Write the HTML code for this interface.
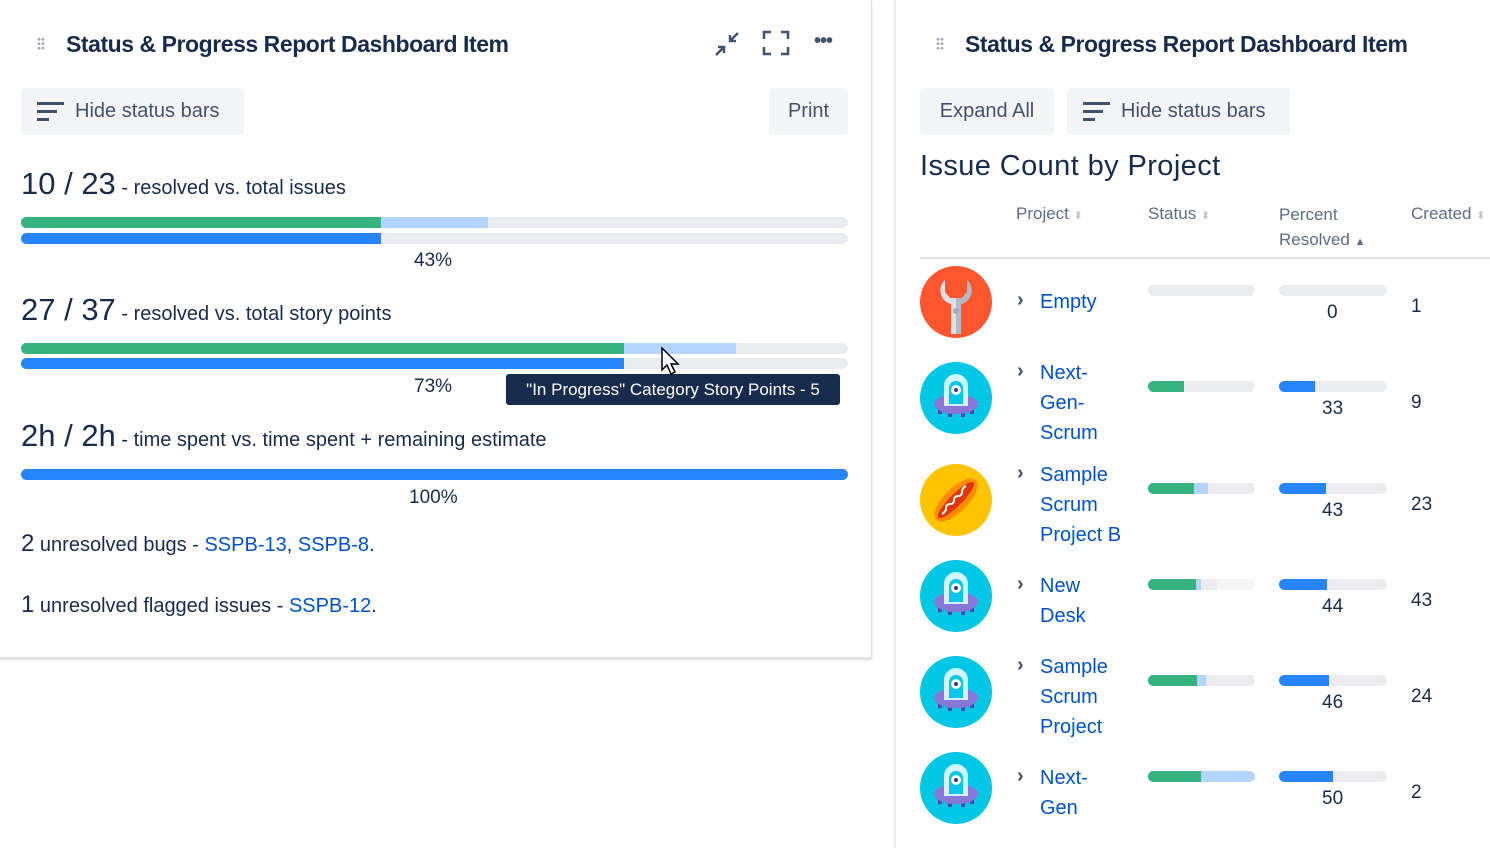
<!DOCTYPE html>
<html><head><meta charset="utf-8"><style>
*{margin:0;padding:0;box-sizing:border-box}
body{width:1490px;height:848px;background:#fff;font-family:"Liberation Sans",sans-serif;color:#172b4d;position:relative;overflow:hidden}
.a{position:absolute;white-space:nowrap}
.bar{position:absolute;height:11px;border-radius:6px;background:#ebecf0;overflow:hidden}
.bar i{position:absolute;top:0;height:100%}
.g{background:#36b37e}.l{background:#b3d4ff}.b{background:#2684ff}
.btn{position:absolute;background:#f4f5f7;border-radius:4px;font-size:20px;color:#42526e;height:47px;line-height:47px}
a{color:#0052cc;text-decoration:none}
.lnk{color:#0052cc;font-size:20px;line-height:30px}
.chev{position:absolute;font-size:20px;color:#42526e;font-weight:bold}
.num{position:absolute;font-size:19px;color:#172b4d}
.dots{position:absolute;width:8px;height:14px;background:radial-gradient(circle,#a5adba 1.3px,transparent 1.6px) 0 0/4px 4.5px}
</style></head><body>
<div class="a" style="left:0;top:0;width:872px;height:659px;border-right:1px solid #dfe1e6;border-bottom:2px solid #dfe1e6;box-shadow:0 1px 2px rgba(9,30,66,.15)"></div>
<div class="dots" style="left:37px;top:37px"></div>
<div class="a" style="left:66px;top:31px;font-size:23px;font-weight:bold;letter-spacing:-0.45px">Status &amp; Progress Report Dashboard Item</div>
<svg class="a" style="left:713px;top:30px" width="28" height="28" viewBox="0 0 28 28" fill="none" stroke="#42526e" stroke-width="2.4"><path d="M25 3l-8 8M17 5v6h6M3 25l8-8M5 17h6v6"/></svg>
<svg class="a" style="left:762px;top:30px" width="28" height="26" viewBox="0 0 28 26" fill="none" stroke="#42526e" stroke-width="2.6"><path d="M2 9V2h7M19 2h7v7M26 17v7h-7M9 24H2v-7"/></svg>
<div class="a" style="left:814px;top:30px;font-size:20px;font-weight:bold;color:#42526e;letter-spacing:-1px">•••</div>
<div class="btn" style="left:21px;top:88px;width:223px"><svg class="a" style="left:16px;top:13px" width="28" height="22" viewBox="0 0 28 22"><rect x="0" y="1" width="27" height="3" fill="#42526e"/><rect x="0" y="9" width="20" height="3" fill="#42526e"/><rect x="0" y="17" width="12" height="3" fill="#42526e"/></svg><span class="a" style="left:54px">Hide status bars</span></div>
<div class="btn" style="left:769px;top:88px;width:79px;text-align:center">Print</div>

<div class="a" style="left:21px;top:166px;font-size:20px"><span style="font-size:31px">10 / 23</span> - resolved vs. total issues</div>
<div class="bar" style="left:21px;top:217px;width:827px"><i class="l" style="left:0;width:467px"></i><i class="g" style="left:0;width:360px"></i></div>
<div class="bar" style="left:21px;top:233px;width:827px"><i class="b" style="left:0;width:360px"></i></div>
<div class="a" style="left:414px;top:250px;font-size:19px">43%</div>

<div class="a" style="left:21px;top:292px;font-size:20px"><span style="font-size:31px">27 / 37</span> - resolved vs. total story points</div>
<div class="bar" style="left:21px;top:343px;width:827px"><i class="l" style="left:0;width:715px"></i><i class="g" style="left:0;width:603px"></i></div>
<div class="bar" style="left:21px;top:358px;width:827px"><i class="b" style="left:0;width:603px"></i></div>
<div class="a" style="left:414px;top:376px;font-size:19px">73%</div>
<div class="a" style="left:506px;top:374px;width:334px;height:31px;background:#172b4d;border-radius:3px;color:#fff;font-size:17px;line-height:31px;text-align:center">"In Progress" Category Story Points - 5</div>
<svg class="a" style="left:660px;top:346px" width="22" height="30" viewBox="0 0 22 30"><path d="M2 2v22l5-5 4 9 4-2-4-8h7z" fill="#fff" stroke="#000" stroke-width="1.5"/></svg>

<div class="a" style="left:21px;top:418px;font-size:20px"><span style="font-size:31px">2h / 2h</span> - time spent vs. time spent + remaining estimate</div>
<div class="bar" style="left:21px;top:469px;width:827px"><i class="b" style="left:0;width:827px"></i></div>
<div class="a" style="left:409px;top:487px;font-size:19px">100%</div>

<div class="a" style="left:21px;top:530px;font-size:20px"><span style="font-size:24px">2</span> unresolved bugs - <a>SSPB-13</a>, <a>SSPB-8</a>.</div>
<div class="a" style="left:21px;top:591px;font-size:20px"><span style="font-size:24px">1</span> unresolved flagged issues - <a>SSPB-12</a>.</div>

<div class="a" style="left:894px;top:0;width:2px;height:848px;background:#ebecf0"></div>
<div class="dots" style="left:936px;top:37px"></div>
<div class="a" style="left:965px;top:31px;font-size:23px;font-weight:bold;letter-spacing:-0.45px">Status &amp; Progress Report Dashboard Item</div>
<div class="btn" style="left:920px;top:88px;width:134px;text-align:center">Expand All</div>
<div class="btn" style="left:1067px;top:88px;width:223px"><svg class="a" style="left:16px;top:13px" width="28" height="22" viewBox="0 0 28 22"><rect x="0" y="1" width="27" height="3" fill="#42526e"/><rect x="0" y="9" width="20" height="3" fill="#42526e"/><rect x="0" y="17" width="12" height="3" fill="#42526e"/></svg><span class="a" style="left:54px">Hide status bars</span></div>
<div class="a" style="left:920px;top:150px;font-size:29px;letter-spacing:0.4px">Issue Count by Project</div>
<div class="a" style="left:1016px;top:204px;font-size:17px;color:#5e6c84">Project <span style="color:#c1c7d0;font-size:11px">⬍</span></div>
<div class="a" style="left:1148px;top:204px;font-size:17px;color:#5e6c84">Status <span style="color:#c1c7d0;font-size:11px">⬍</span></div>
<div class="a" style="left:1279px;top:202px;font-size:17px;color:#5e6c84;line-height:25px;white-space:normal;width:110px">Percent Resolved <span style="font-size:11px;color:#5e6c84">▲</span></div>
<div class="a" style="left:1411px;top:204px;font-size:17px;color:#5e6c84">Created <span style="color:#c1c7d0;font-size:11px">⬍</span></div>
<div class="a" style="left:920px;top:257px;width:570px;height:2px;background:#dfe1e6"></div>

<svg width="0" height="0" style="position:absolute"><defs>
<symbol id="alien" viewBox="0 0 72 72"><circle cx="36" cy="36" r="36" fill="#00c7e6"/><rect x="28" y="46" width="4" height="9" fill="#5243aa"/><rect x="41" y="46" width="4" height="9" fill="#5243aa"/><rect x="18" y="44" width="4" height="8" fill="#5243aa"/><rect x="50" y="44" width="4" height="8" fill="#5243aa"/><ellipse cx="36" cy="42" rx="22" ry="10" fill="#8777d9"/><path d="M24 44V24a12 12 0 0 1 24 0v20z" fill="#e6fcff" opacity=".9"/><path d="M29 42V26a7 7 0 0 1 14 0v16z" fill="#00c7e6"/><circle cx="36" cy="28" r="5" fill="#fff"/><circle cx="36" cy="28" r="2" fill="#403294"/></symbol>
</defs></svg>

<svg class="a" style="left:920px;top:266px" width="72" height="72" viewBox="0 0 72 72"><circle cx="36" cy="36" r="36" fill="#ff5630"/><path d="M25 14a14 14 0 0 0 6 24v30h10V38a14 14 0 0 0 6-24v12l-5 6h-12l-5-6z" fill="#dfe1e6"/><path d="M36 32h6l5-6V14a14 14 0 0 1-6 24v30h-5z" fill="#b3bac5"/><circle cx="36" cy="45" r="3" fill="#a5adba"/></svg>
<div class="chev" style="left:1017px;top:289px">›</div>
<div class="a lnk" style="left:1040px;top:287px">Empty</div>
<div class="bar" style="left:1148px;top:285px;width:107px"></div>
<div class="bar" style="left:1279px;top:285px;width:108px"></div>
<div class="num" style="left:1327px;top:302px">0</div>
<div class="num" style="left:1411px;top:296px">1</div>

<svg class="a" style="left:920px;top:362px" width="72" height="72"><use href="#alien"/></svg>
<div class="chev" style="left:1017px;top:360px">›</div>
<div class="a lnk" style="left:1040px;top:358px;white-space:normal;width:80px">Next-<br>Gen-<br>Scrum</div>
<div class="bar" style="left:1148px;top:381px;width:107px"><i class="g" style="left:0;width:36px"></i></div>
<div class="bar" style="left:1279px;top:381px;width:108px"><i class="b" style="left:0;width:36px"></i></div>
<div class="num" style="left:1322px;top:398px">33</div>
<div class="num" style="left:1411px;top:392px">9</div>

<svg class="a" style="left:920px;top:464px" width="72" height="72" viewBox="0 0 72 72"><circle cx="36" cy="36" r="36" fill="#ffc400"/><ellipse cx="36" cy="36" rx="28" ry="12" transform="rotate(-45 36 36)" fill="#ff8b00"/><ellipse cx="36" cy="36" rx="25" ry="6" transform="rotate(-45 36 36)" fill="#de350b"/><path d="M22 50q4-2 4-6t4-4 4-4 4-4 4-4 4-6" stroke="#fff" stroke-width="2" fill="none"/></svg>
<div class="chev" style="left:1017px;top:462px">›</div>
<div class="a lnk" style="left:1040px;top:460px;white-space:normal;width:100px">Sample<br>Scrum<br>Project B</div>
<div class="bar" style="left:1148px;top:483px;width:107px"><i class="l" style="left:0;width:60px"></i><i class="g" style="left:0;width:46px"></i></div>
<div class="bar" style="left:1279px;top:483px;width:108px"><i class="b" style="left:0;width:47px"></i></div>
<div class="num" style="left:1322px;top:500px">43</div>
<div class="num" style="left:1411px;top:494px">23</div>

<svg class="a" style="left:920px;top:560px" width="72" height="72"><use href="#alien"/></svg>
<div class="chev" style="left:1017px;top:573px">›</div>
<div class="a lnk" style="left:1040px;top:571px;white-space:normal;width:80px">New<br>Desk</div>
<div class="bar" style="left:1148px;top:579px;width:107px;background:#f4f5f7"><i style="left:0;width:69px;background:#ebecf0"></i><i class="l" style="left:0;width:53px"></i><i class="g" style="left:0;width:48px"></i></div>
<div class="bar" style="left:1279px;top:579px;width:108px"><i class="b" style="left:0;width:48px"></i></div>
<div class="num" style="left:1322px;top:596px">44</div>
<div class="num" style="left:1411px;top:590px">43</div>

<svg class="a" style="left:920px;top:656px" width="72" height="72"><use href="#alien"/></svg>
<div class="chev" style="left:1017px;top:654px">›</div>
<div class="a lnk" style="left:1040px;top:652px;white-space:normal;width:80px">Sample<br>Scrum<br>Project</div>
<div class="bar" style="left:1148px;top:675px;width:107px"><i class="l" style="left:0;width:58px"></i><i class="g" style="left:0;width:49px"></i></div>
<div class="bar" style="left:1279px;top:675px;width:108px"><i class="b" style="left:0;width:50px"></i></div>
<div class="num" style="left:1322px;top:692px">46</div>
<div class="num" style="left:1411px;top:686px">24</div>

<svg class="a" style="left:920px;top:752px" width="72" height="72"><use href="#alien"/></svg>
<div class="chev" style="left:1017px;top:765px">›</div>
<div class="a lnk" style="left:1040px;top:763px;white-space:normal;width:80px">Next-<br>Gen</div>
<div class="bar" style="left:1148px;top:771px;width:107px"><i class="l" style="left:0;width:107px"></i><i class="g" style="left:0;width:53px"></i></div>
<div class="bar" style="left:1279px;top:771px;width:108px"><i class="b" style="left:0;width:54px"></i></div>
<div class="num" style="left:1322px;top:788px">50</div>
<div class="num" style="left:1411px;top:782px">2</div>
</body></html>
